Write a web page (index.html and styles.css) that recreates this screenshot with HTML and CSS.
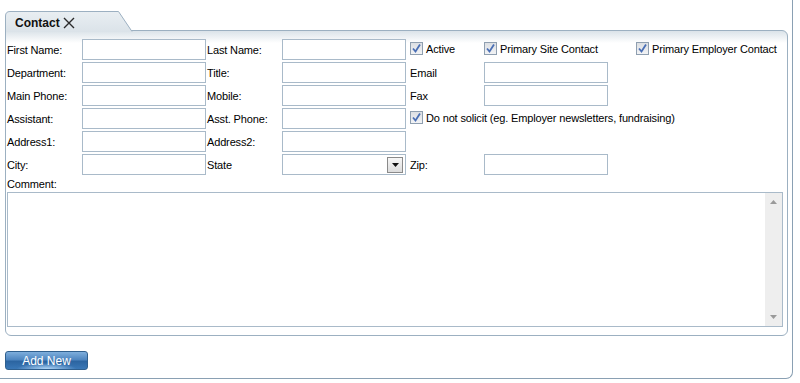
FILE: index.html
```html
<!DOCTYPE html>
<html lang="en">
<head>
    <meta charset="UTF-8">
    <title>Contact</title>
    <link rel="stylesheet" href="styles.css">
</head>
<body>
    <div class="frame">
        <div class="tabstrip">
            <div class="tab">
                <svg class="tab-shape" width="128" height="21" viewBox="0 0 128 21">
                    <defs>
                        <linearGradient id="tabFill" x1="0" y1="0" x2="0" y2="1">
                            <stop offset="0" stop-color="#e9eef2"/>
                            <stop offset="1" stop-color="#dbe3e9"/>
                        </linearGradient>
                    </defs>
                    <path d="M0.5 21 V5 Q0.5 0.5 5 0.5 H113.5 L127.5 21 Z" fill="url(#tabFill)"/>
                    <path d="M0.5 21 V5 Q0.5 0.5 5 0.5 H113.5 L127 20.5" fill="none" stroke="#9cb0c1"/>
                </svg>
                <span class="tab-title">Contact</span>
                <svg class="tab-close" width="12" height="12" viewBox="0 0 12 12">
                    <path d="M1 1 L11 11 M11 1 L1 11" stroke="#2b2b2b" stroke-width="1.4" fill="none"/>
                </svg>
            </div>
        </div>

        <div class="panel">
            <div class="form-grid">
                <label class="lbl">First Name:</label>
                <input type="text" class="field">
                <label class="lbl">Last Name:</label>
                <input type="text" class="field">
                <label class="check"><span class="box"><svg width="11" height="11" viewBox="0 0 11 11"><path d="M2 5.5 L4.5 8.5 L9 1.5" stroke="#4a6fb5" stroke-width="1.8" fill="none"/></svg></span>Active</label>
                <label class="check"><span class="box"><svg width="11" height="11" viewBox="0 0 11 11"><path d="M2 5.5 L4.5 8.5 L9 1.5" stroke="#4a6fb5" stroke-width="1.8" fill="none"/></svg></span>Primary Site Contact</label>
                <label class="check"><span class="box"><svg width="11" height="11" viewBox="0 0 11 11"><path d="M2 5.5 L4.5 8.5 L9 1.5" stroke="#4a6fb5" stroke-width="1.8" fill="none"/></svg></span>Primary Employer Contact</label>

                <label class="lbl">Department:</label>
                <input type="text" class="field">
                <label class="lbl">Title:</label>
                <input type="text" class="field">
                <label class="lbl">Email</label>
                <input type="text" class="field">
                <span></span>

                <label class="lbl">Main Phone:</label>
                <input type="text" class="field">
                <label class="lbl">Mobile:</label>
                <input type="text" class="field">
                <label class="lbl">Fax</label>
                <input type="text" class="field">
                <span></span>

                <label class="lbl">Assistant:</label>
                <input type="text" class="field">
                <label class="lbl">Asst. Phone:</label>
                <input type="text" class="field">
                <label class="check wide"><span class="box"><svg width="11" height="11" viewBox="0 0 11 11"><path d="M2 5.5 L4.5 8.5 L9 1.5" stroke="#4a6fb5" stroke-width="1.8" fill="none"/></svg></span>Do not solicit (eg. Employer newsletters, fundraising)</label>

                <label class="lbl">Address1:</label>
                <input type="text" class="field">
                <label class="lbl">Address2:</label>
                <input type="text" class="field">
                <span class="rest"></span>

                <label class="lbl">City:</label>
                <input type="text" class="field">
                <label class="lbl">State</label>
                <div class="select">
                    <span class="select-btn">
                        <svg width="7" height="4" viewBox="0 0 7 4"><path d="M0 0 H7 L3.5 4 Z" fill="#111"/></svg>
                    </span>
                </div>
                <label class="lbl">Zip:</label>
                <input type="text" class="field">
                <span></span>
            </div>

            <div class="comment-label">Comment:</div>
            <div class="comment-box">
                <textarea class="comment-text"></textarea>
                <div class="scrollbar">
                    <svg width="7" height="4" viewBox="0 0 7 4"><path d="M0 4 H7 L3.5 0 Z" fill="#9a9a9a"/></svg>
                    <svg width="7" height="4" viewBox="0 0 7 4"><path d="M0 0 H7 L3.5 4 Z" fill="#9a9a9a"/></svg>
                </div>
            </div>
        </div>

        <button class="add-button">Add New</button>
    </div>
</body>
</html>
```

FILE: styles.css
```css
body {
    margin: 0;
    background-color: #fff;
    font-family: "Liberation Sans", Arial, sans-serif;
    font-size: 11px;
    letter-spacing: -0.15px;
    color: #000;
}

.frame {
    box-sizing: border-box;
    width: 793px;
    height: 379px;
    border-right: 1px solid #8aa0b3;
    border-bottom: 1px solid #8aa0b3;
    border-bottom-right-radius: 7px;
}

.tabstrip {
    height: 31px;
    padding: 11px 0 0 5px;
    box-sizing: border-box;
}

.tab {
    position: relative;
    width: 128px;
    height: 21px;
    display: flex;
    align-items: center;
    z-index: 1;
}

.tab-shape {
    position: absolute;
    left: 0;
    top: 0;
}

.tab-title {
    position: relative;
    margin-left: 10px;
    margin-top: 2px;
    font-weight: bold;
    font-size: 12px;
    letter-spacing: 0;
    color: #111;
}

.tab-close {
    position: relative;
    margin-left: 3px;
    margin-top: 3px;
}

.panel {
    box-sizing: border-box;
    width: 783px;
    margin-left: 5px;
    margin-top: -1px;
    border: 1px solid #9cb0c1;
    border-radius: 0 6px 6px 6px;
    padding: 8px 3px 8px 1px;
    background: linear-gradient(#dbe3e9 0, #ffffff 12px);
}

.form-grid {
    display: grid;
    grid-template-columns: 75px 125px 75px 128px 74px 152px 1fr;
    grid-auto-rows: 21px;
    row-gap: 2px;
}

.lbl {
    display: flex;
    align-items: center;
    padding-top: 1px;
}

.field {
    box-sizing: border-box;
    width: 124px;
    height: 21px;
    margin: 0;
    border: 1px solid #a9bac9;
    background: #fff;
    font: inherit;
    padding: 2px 3px;
}

.check {
    display: flex;
    align-items: center;
    gap: 3px;
    margin-top: -2px;
}

.check.wide {
    grid-column: 5 / 8;
}

.rest {
    grid-column: 5 / 8;
}

.box {
    box-sizing: border-box;
    width: 13px;
    height: 13px;
    border: 1px solid #8f9fb0;
    background: linear-gradient(#dcdfe3, #f2f3f5);
    display: flex;
    align-items: center;
    justify-content: center;
}

.select {
    box-sizing: border-box;
    width: 124px;
    height: 21px;
    border: 1px solid #a9bac9;
    background: #fff;
    display: flex;
    justify-content: flex-end;
    align-items: center;
    padding-right: 2px;
}

.select-btn {
    box-sizing: border-box;
    width: 16px;
    height: 16px;
    border: 1px solid #8a8a8a;
    background: linear-gradient(#f7f7f7, #dcdcdc);
    display: flex;
    align-items: center;
    justify-content: center;
}

.comment-label {
    margin: 2px 0 1px;
    line-height: 14px;
}

.comment-box {
    box-sizing: border-box;
    width: 776px;
    height: 135px;
    border: 1px solid #a9bac9;
    display: flex;
}

.comment-text {
    flex: 1;
    border: none;
    resize: none;
    outline: none;
    font: inherit;
    overflow: hidden;
}

.scrollbar {
    width: 17px;
    background-color: #eeeeee;
    display: flex;
    flex-direction: column;
    justify-content: space-between;
    align-items: center;
    padding: 7px 0;
}

.add-button {
    display: block;
    box-sizing: border-box;
    width: 83px;
    height: 19px;
    margin: 15px 0 0 5px;
    padding: 0;
    border: 1px solid #2f5f8e;
    border-radius: 3px;
    background:
        radial-gradient(ellipse 30px 6px at 50% 100%, rgba(190, 225, 255, 0.9), rgba(190, 225, 255, 0) 100%),
        linear-gradient(#7eaedc 0%, #4f86c0 45%, #2c65a1 55%, #3a78b7 100%);
    color: #fff;
    font-family: "Liberation Sans", Arial, sans-serif;
    font-size: 12px;
    cursor: pointer;
}
```
